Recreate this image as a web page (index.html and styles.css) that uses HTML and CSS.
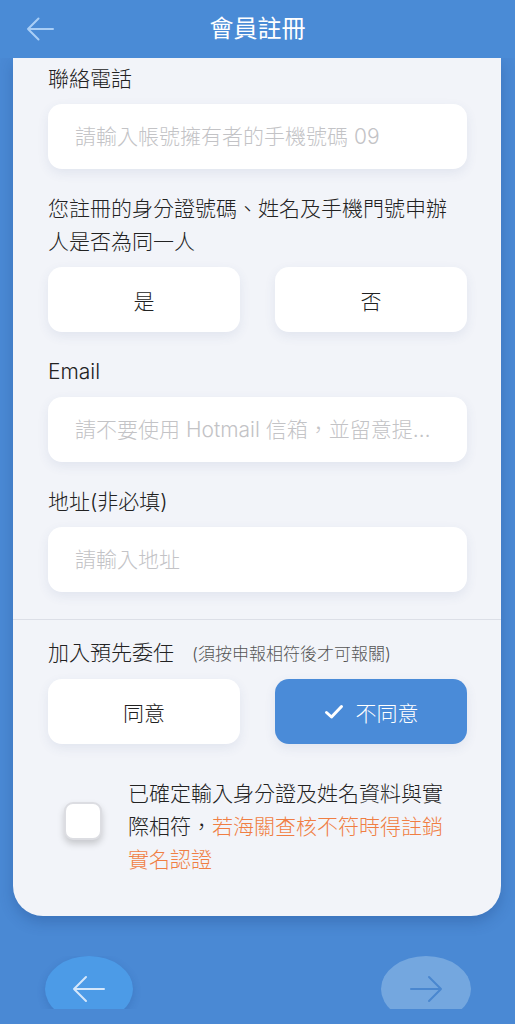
FILE: index.html
```html
<!DOCTYPE html>
<html lang="zh-Hant-TW">
<head>
    <meta charset="UTF-8">
    <title>會員註冊</title>
    <link rel="stylesheet" href="styles.css">
</head>
<body>

    <!--頂部標題-->
    <div class="header">
        <a class="back" href="javascript:void(0);">
            <svg width="28" height="24" viewBox="0 0 28 24"><path d="M2 12 H27 M12.5 1.5 L2 12 L12.5 22.5" fill="none" stroke="currentColor" stroke-width="2" stroke-linecap="round" stroke-linejoin="round"/></svg>
        </a>
        <h1>會員註冊</h1>
    </div>

    <!--註冊表單-->
    <div class="card">
        <div class="section">
            <div class="field">
                <p class="label">聯絡電話</p>
                <input class="input-box" type="text" placeholder="請輸入帳號擁有者的手機號碼 09">
            </div>
            <div class="field">
                <p class="label">您註冊的身分證號碼、姓名及手機門號申辦人是否為同一人</p>
                <div class="choice">
                    <button class="btn">是</button>
                    <button class="btn">否</button>
                </div>
            </div>
            <div class="field">
                <p class="label">Email</p>
                <input class="input-box" type="text" placeholder="請不要使用 Hotmail 信箱，並留意提供正確的電子信箱">
            </div>
            <div class="field last">
                <p class="label">地址(非必填)</p>
                <input class="input-box" type="text" placeholder="請輸入地址">
            </div>
        </div>
        <div class="section entrust">
            <div class="field">
                <p class="label">加入預先委任<span class="note">(須按申報相符後才可報關)</span></p>
                <div class="choice">
                    <button class="btn">同意</button>
                    <button class="btn active">
                        <svg width="20" height="16" viewBox="0 0 20 16"><path d="M2.5 8.5 L7.5 13 L17.5 2.5" fill="none" stroke="currentColor" stroke-width="3" stroke-linecap="round" stroke-linejoin="round"/></svg>
                        不同意
                    </button>
                </div>
            </div>
            <label class="confirm">
                <span class="check-box"></span>
                <span class="confirm-text">已確定輸入身分證及姓名資料與實際相符，<em>若海關查核不符時得註銷實名認證</em></span>
            </label>
        </div>
    </div>

    <!--上一步 下一步-->
    <div class="footer">
        <a class="nav prev" href="javascript:void(0);">
            <svg width="34" height="28" viewBox="0 0 34 28"><path d="M2 14 H32 M14 2 L2 14 L14 26" fill="none" stroke="currentColor" stroke-width="2" stroke-linecap="round" stroke-linejoin="round"/></svg>
        </a>
        <a class="nav next" href="javascript:void(0);">
            <svg width="34" height="28" viewBox="0 0 34 28"><path d="M2 14 H32 M20 2 L32 14 L20 26" fill="none" stroke="currentColor" stroke-width="2" stroke-linecap="round" stroke-linejoin="round"/></svg>
        </a>
    </div>

</body>
</html>
```

FILE: styles.css
```css
/*reset*/
body, p, h1, input, button {
    margin: 0;
    padding: 0;
}
a {
    text-decoration: none;
}
em {
    font-style: normal;
}

body {
    height: 1024px;
    overflow: hidden;
    background-color: #4a89d4;
    font-family: "Inter", "Noto Sans CJK TC", sans-serif;
    font-weight: 300;
    color: #222;
}

/*頂部標題*/
.header {
    display: flex;
    justify-content: center;
    align-items: center;
    position: relative;
    height: 58px;
    background-color: #4a8bd6;
}
.header h1 {
    font-size: 24px;
    font-weight: 400;
    color: #fff;
    line-height: 58px;
}
.header .back {
    position: absolute;
    left: 26px;
    top: 17px;
    color: #a9cef6;
}
.header .back svg {
    display: block;
}

/*註冊表單*/
.card {
    margin: 0 14px 0 13px;
    border-radius: 0 0 30px 30px;
    background-color: #f2f4f9;
    box-shadow: 0 6px 14px rgba(20, 50, 110, .25);
}
.card .section {
    padding: 4px 34px 27px 35px;
}
.card .entrust {
    padding: 16px 34px 40px 35px;
    border-top: 1px solid #dcdfe7;
}
.field {
    margin-bottom: 23px;
}
.field.last {
    margin-bottom: 0;
}
.entrust .field {
    margin-bottom: 33px;
}
.field .label {
    margin-bottom: 9px;
    font-size: 21px;
    line-height: 33px;
}
.entrust .field .label {
    margin-bottom: 8px;
}
.field .label .note {
    margin-left: 18px;
    font-size: 17px;
    color: #555;
}
.input-box {
    display: block;
    box-sizing: border-box;
    width: 100%;
    height: 65px;
    padding: 0 27px;
    border: none;
    border-radius: 14px;
    outline: none;
    background-color: #fff;
    box-shadow: 0 4px 12px rgba(60, 80, 130, .09);
    font-family: inherit;
    font-weight: 300;
    font-size: 21px;
    color: #222;
    text-overflow: ellipsis;
}
.input-box::placeholder {
    color: #c3c3c6;
}
.choice {
    display: flex;
    gap: 35px;
}
.choice .btn {
    display: flex;
    justify-content: center;
    align-items: center;
    gap: 12px;
    flex: 1 1 0;
    height: 65px;
    border: none;
    border-radius: 14px;
    background-color: #fff;
    box-shadow: 0 4px 12px rgba(60, 80, 130, .09);
    font-family: inherit;
    font-weight: 300;
    font-size: 21px;
    color: #222;
    cursor: pointer;
}
.choice .btn.active {
    background-color: #4a8bd8;
    color: #fff;
}

/*確認勾選*/
.confirm {
    display: flex;
    align-items: center;
    gap: 26px;
    padding-left: 16px;
    cursor: pointer;
}
.confirm .check-box {
    flex: none;
    box-sizing: border-box;
    width: 38px;
    height: 38px;
    margin-top: -12px;
    border: 2px solid #dcdde2;
    border-radius: 9px;
    background-color: #fff;
    box-shadow: 0 4px 7px rgba(0, 0, 0, .18);
}
.confirm .confirm-text {
    width: 325px;
    font-size: 21px;
    line-height: 33px;
}
.confirm em {
    color: #f07e43;
}

/*上一步 下一步*/
.footer {
    display: flex;
    justify-content: space-between;
    height: 53px;
    margin-top: 40px;
    padding: 0 44px 0 45px;
    overflow: hidden;
}
.footer .nav {
    display: flex;
    justify-content: center;
    align-items: center;
    width: 88px;
    height: 66px;
    border-radius: 50%;
}
.footer .prev {
    background-color: #4c9be7;
    color: #d4e7fb;
    box-shadow: 0 3px 8px rgba(20, 60, 130, .2);
}
.footer .next {
    width: 90px;
    background-color: #74a7df;
    color: #4a87cf;
}
```
